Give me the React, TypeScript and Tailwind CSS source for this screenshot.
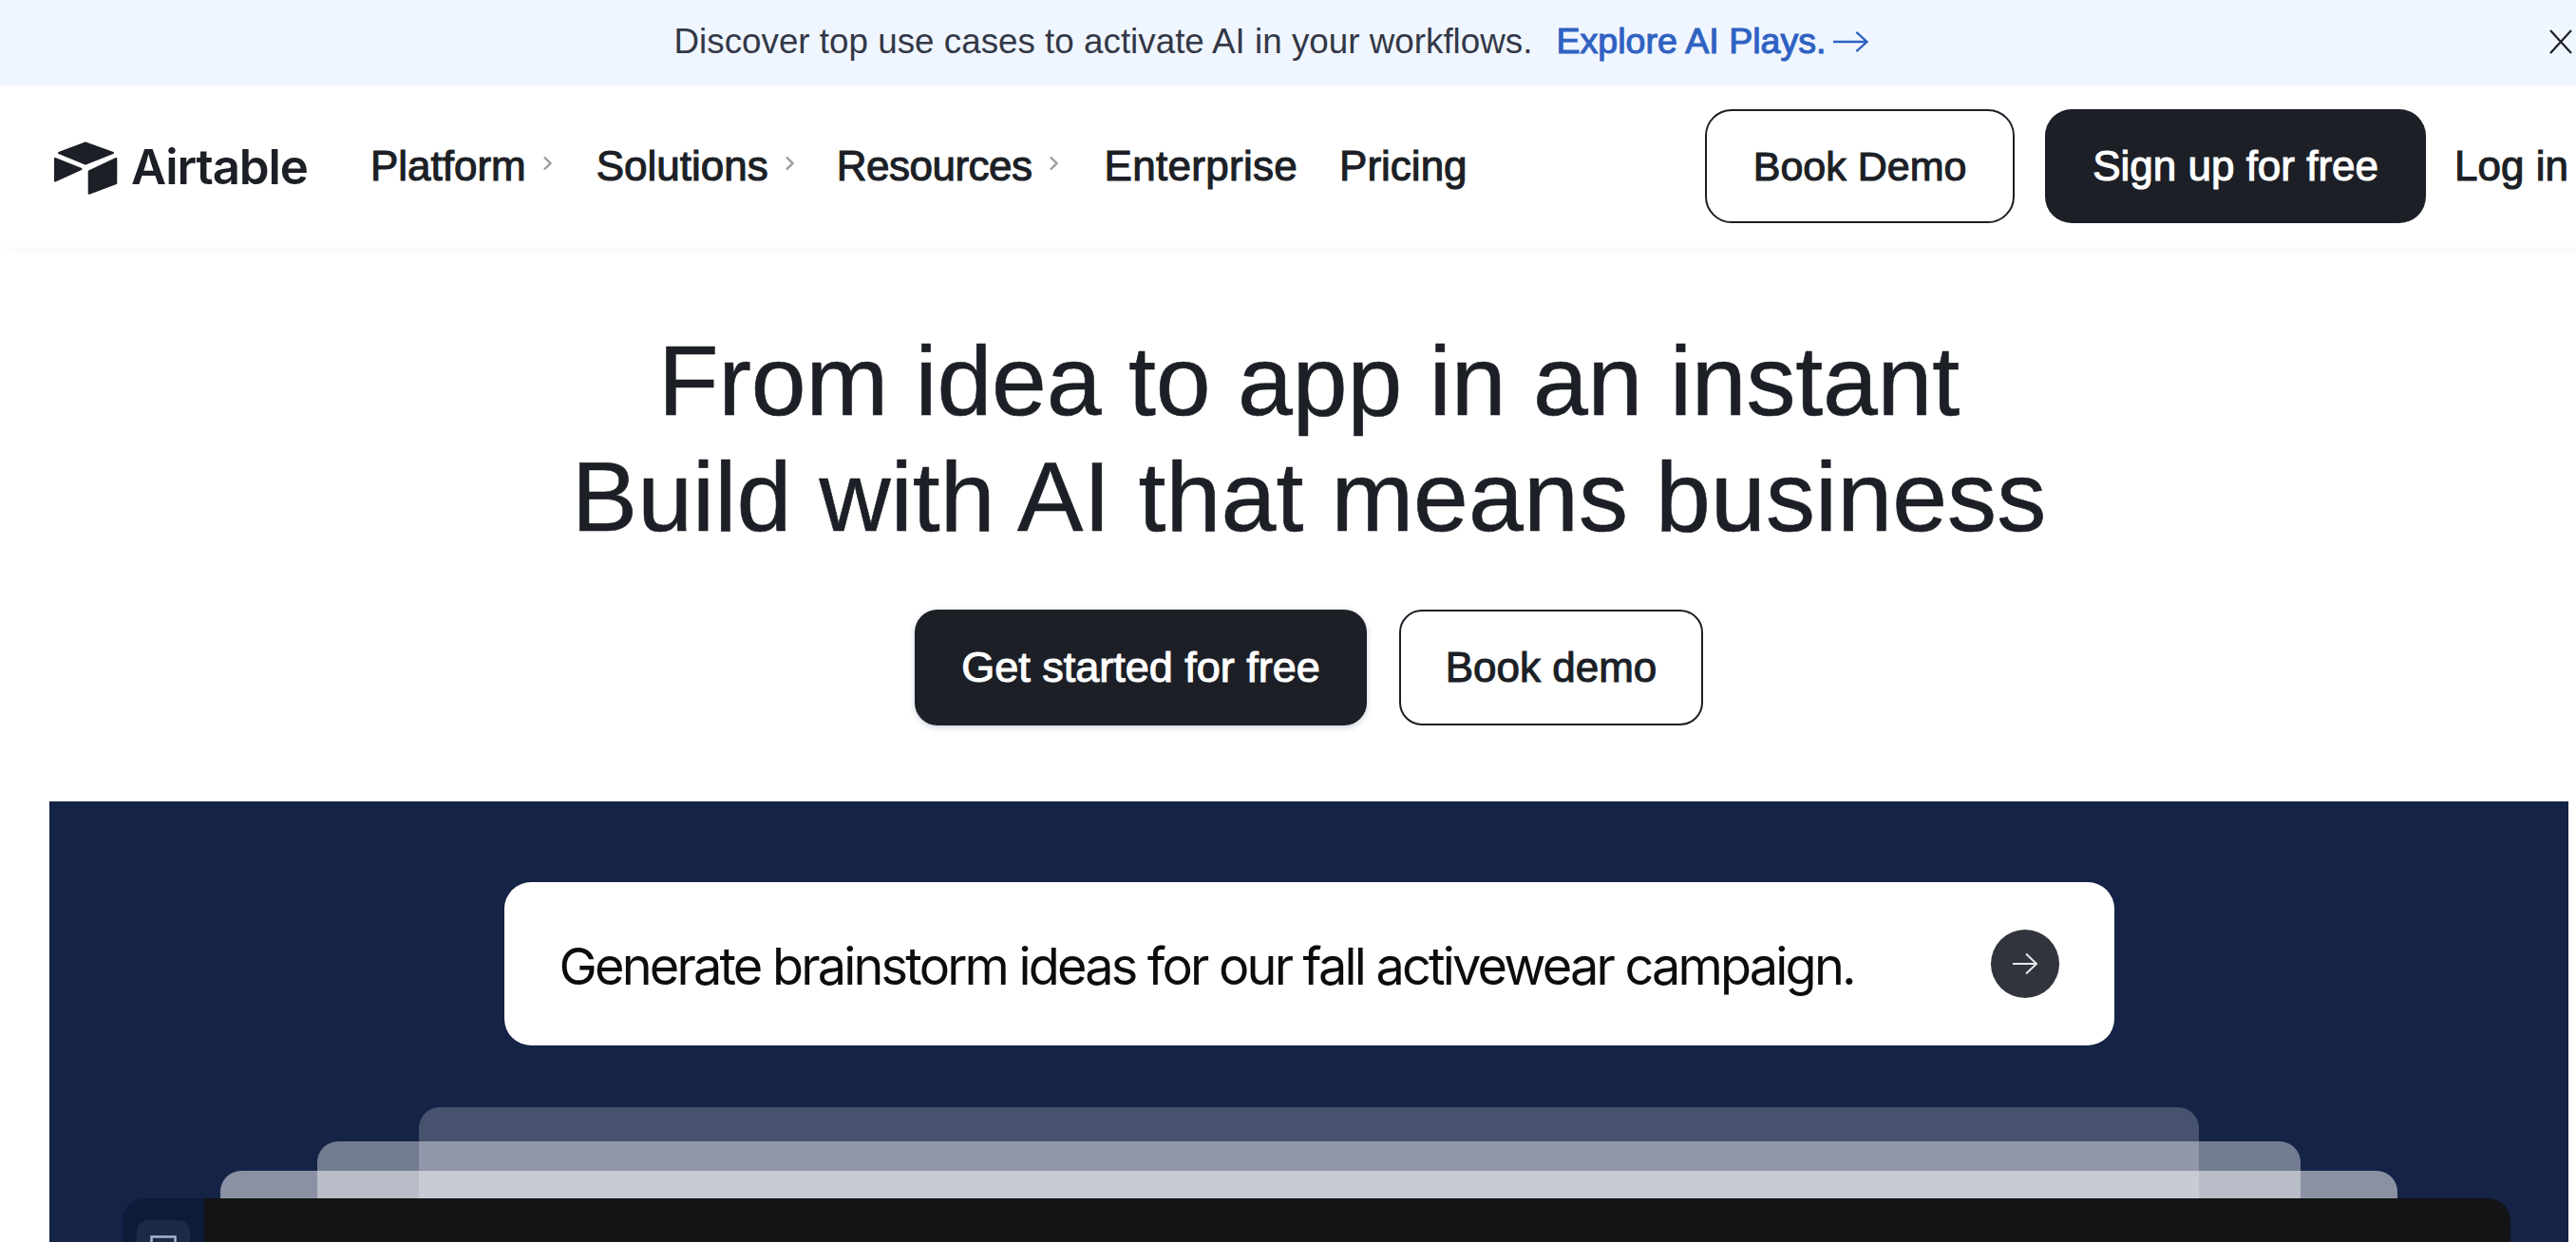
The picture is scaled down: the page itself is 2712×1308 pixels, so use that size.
const sans = "font-['Liberation_Sans',Arial,sans-serif]";
const medium = "[-webkit-text-stroke:1.1px_currentColor]";

function Chevron() {
  return (
    <svg width="11" height="16" viewBox="0 0 11 16" fill="none" className="ml-[17px] mt-[-6px]">
      <path d="M2 1.5 L8.5 8 L2 14.5" stroke="#9a9b9e" strokeWidth="2.4" />
    </svg>
  );
}

function NavItem({ label, chevron, className }: { label: string; chevron?: boolean; className?: string }) {
  return (
    <a className={`flex items-center text-[44px] leading-none text-[#1c1f26] ${medium} ${className ?? ""}`}>
      {label}
      {chevron && <Chevron />}
    </a>
  );
}

function Logo() {
  return (
    <div className="flex items-center">
      <svg width="67" height="57" viewBox="0 0 67 57" fill="#1c1f26" stroke="#1c1f26" strokeWidth="2" strokeLinejoin="round" className="mt-[4px]">
        <polygon points="33,1.5 62,12 33,23.5 5,12" />
        <polygon points="1,18 28.5,29 1,41.5" />
        <polygon points="36.7,31.5 65.3,18 65.3,44 36.7,54.7" />
      </svg>
      <span className="ml-[14px] font-['Inter',sans-serif] text-[51px] font-semibold leading-none tracking-[-1.1px] text-[#1c1f26]">
        Airtable
      </span>
    </div>
  );
}

export default function App() {
  return (
    <div className={`h-[1308px] w-[2712px] overflow-hidden bg-white ${sans}`}>
      <div className="w-[2756px]">
        {/* Announcement */}
        <div className="flex h-[90px] items-center bg-[#f0f6ff] pb-[2px] pr-[48px]">
          <div className="flex flex-1 items-center justify-center pr-[8px] leading-none">
            <span className="text-[36.8px] text-[#333847]">Discover top use cases to activate AI in your workflows.</span>
            <a className={`ml-[25px] text-[37.6px] text-[#2f62c2] ${medium}`}>Explore AI Plays.</a>
            <svg width="37" height="24" viewBox="0 0 38 24" fill="none" stroke="#2f62c2" strokeWidth="2.4" className="ml-[7px]">
              <path d="M0 12 H36 M25 1.5 L36.5 12 L25 22.5" />
            </svg>
          </div>
          <svg width="24" height="26" viewBox="0 0 24 26" fill="none" stroke="#1c1f26" strokeWidth="2.2">
            <path d="M1 1 L23 25 M23 1 L1 25" />
          </svg>
        </div>

        {/* Navigation */}
        <nav className="relative flex h-[170px] items-center bg-white pl-[57px] pr-[52px] shadow-[0_6px_10px_rgba(0,0,0,0.02)]">
          <Logo />
          <div className="ml-[66px] flex items-center">
            <NavItem label="Platform" chevron />
            <NavItem label="Solutions" chevron className="ml-[46px]" />
            <NavItem label="Resources" chevron className="ml-[44px] tracking-[-0.5px]" />
            <NavItem label="Enterprise" className="ml-[48px] tracking-[0.3px]" />
            <NavItem label="Pricing" className="ml-[44px]" />
          </div>
          <div className="ml-auto flex items-center">
            <a className={`flex h-[120px] w-[326px] items-center justify-center rounded-[28px] border-2 border-[#1c1f26] text-[43px] text-[#1c1f26] ${medium}`}>
              Book Demo
            </a>
            <a className={`ml-[32px] flex h-[120px] w-[401px] items-center justify-center rounded-[28px] bg-[#1c1f26] text-[44px] text-white ${medium}`}>
              Sign up for free
            </a>
            <NavItem label="Log in" className="ml-[30px] text-[42.5px]" />
          </div>
        </nav>

        {/* Hero */}
        <section className="flex flex-col items-center pt-[80px]">
          <h1 className="text-center text-[104px] font-normal leading-[122px] text-[#1c1f26] [-webkit-text-stroke:0.6px_currentColor]">
            <span className="tracking-[-0.2px]">From idea to app in an instant</span>
            <br />
            <span className="tracking-[0.1px]">Build with AI that means business</span>
          </h1>
          <div className="mt-[58px] flex gap-[34px]">
            <a className={`flex h-[122px] w-[476px] items-center justify-center rounded-[24px] bg-[#1c1f26] text-[45px] text-white shadow-[0_2px_6px_rgba(45,60,120,0.25)] ${medium}`}>
              Get started for free
            </a>
            <a className={`flex h-[122px] w-[320px] items-center justify-center rounded-[24px] border-2 border-[#1c1f26] text-[44px] text-[#1c1f26] ${medium}`}>
              Book demo
            </a>
          </div>
        </section>

        {/* Demo panel */}
        <section className="mx-[52px] mt-[80px] flex h-[600px] flex-col items-center overflow-hidden bg-[#142346] pt-[85px]">
          <div className="flex h-[172px] w-[1695px] shrink-0 items-center justify-between rounded-[28px] bg-white pl-[58px] pr-[58px]">
            <span className="mt-[6px] font-['Inter',sans-serif] text-[54px] leading-none tracking-[-2.8px] text-[#0c0c0e]">
              Generate brainstorm ideas for our fall activewear campaign.
            </span>
            <div className="flex h-[72px] w-[72px] items-center justify-center rounded-full bg-[#31343c]">
              <svg width="28" height="24" viewBox="0 0 28 24" fill="none" stroke="#e8e8ea" strokeWidth="2">
                <path d="M1 12 H26 M15 1.5 L26 12 L15 22.5" />
              </svg>
            </div>
          </div>

          <div className="mt-[65px] flex w-full flex-col items-center">
            <div className="mb-[-264px] h-[300px] w-[1874px] shrink-0 rounded-t-[22px] bg-white/[0.22]" />
            <div className="mb-[-269px] h-[300px] w-[2088px] shrink-0 rounded-t-[22px] bg-white/40" />
            <div className="mb-[-271px] h-[300px] w-[2292px] shrink-0 rounded-t-[22px] bg-white/50" />

            <div className="relative ml-[77px] flex h-[200px] w-[2514px] shrink-0 self-start">
              <div className="w-[86px] shrink-0 rounded-tl-[24px] bg-[#0c1b37] px-[15px] pt-[23px]">
                <div className="h-full rounded-t-[12px] bg-[#1a2a47] px-[14px] pt-[16px]">
                  <svg width="28" height="28" viewBox="0 0 28 28" fill="none" stroke="#a9b5cb" strokeWidth="2.5">
                    <rect x="1.5" y="1.5" width="25" height="25" />
                    <path d="M1.5 9 H26.5" />
                  </svg>
                </div>
              </div>
              <div className="flex-1 rounded-tr-[24px] bg-[#131415]" />
            </div>
          </div>
        </section>
      </div>
    </div>
  );
}
